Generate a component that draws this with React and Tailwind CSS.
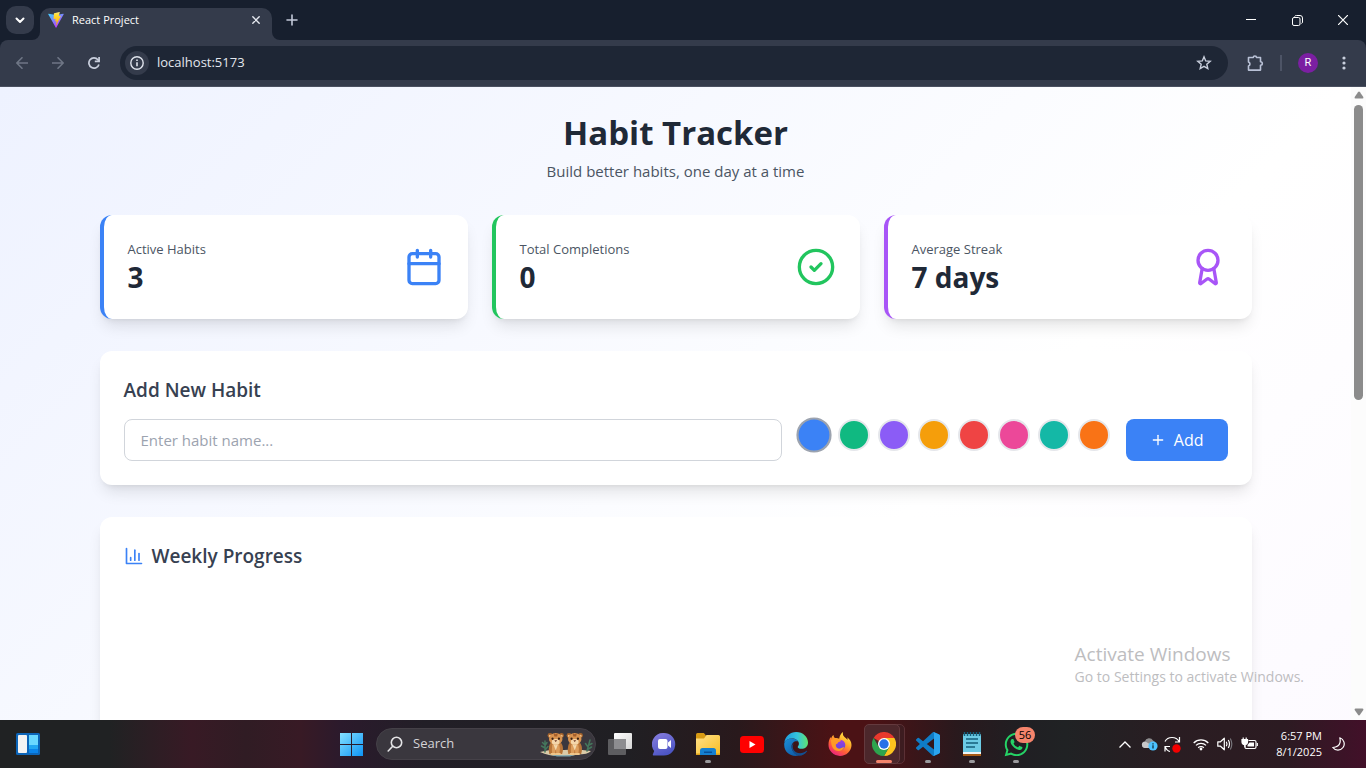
import React, { useState } from "react";
import { Plus } from "lucide-react";
import { FaWhatsapp } from "react-icons/fa";

const COLORS = [
  { name: "Blue", bg: "bg-[#3b82f6]" },
  { name: "Green", bg: "bg-[#10b981]" },
  { name: "Purple", bg: "bg-[#8b5cf6]" },
  { name: "Amber", bg: "bg-[#f59e0b]" },
  { name: "Red", bg: "bg-[#ef4444]" },
  { name: "Pink", bg: "bg-[#ec4899]" },
  { name: "Teal", bg: "bg-[#14b8a6]" },
  { name: "Orange", bg: "bg-[#f97316]" },
];

function Stroke({ size = 16, width = 2, box = 24, className = "", children }) {
  return (
    <svg
      width={size}
      height={size}
      viewBox={`0 0 ${box} ${box}`}
      fill="none"
      stroke="currentColor"
      strokeWidth={width}
      strokeLinecap="round"
      strokeLinejoin="round"
      className={`shrink-0 ${className}`}
      aria-hidden="true"
    >
      {children}
    </svg>
  );
}

function ViteLogo() {
  return (
    <svg width="16" height="16" viewBox="0 0 32 32" className="shrink-0" aria-hidden="true">
      <defs>
        <linearGradient id="viteA" x1="0" y1="0" x2="0.6" y2="1">
          <stop offset="0" stopColor="#41d1ff" />
          <stop offset="1" stopColor="#bd34fe" />
        </linearGradient>
        <linearGradient id="viteB" x1="0" y1="0" x2="0" y2="1">
          <stop offset="0" stopColor="#ffea83" />
          <stop offset="0.2" stopColor="#ffdd35" />
          <stop offset="1" stopColor="#ffa800" />
        </linearGradient>
      </defs>
      <path d="M31.4 4.7 16.8 30.9a.8.8 0 0 1-1.4 0L.5 4.7a.8.8 0 0 1 .8-1.2L16 6.100l14.500-2.600a.8.8 0 0 1 .9 1.200z" fill="url(#viteA)" />
      <path d="M23 .2 12.200 2.300a.4.4 0 0 0-.3.400l-.7 11.200a.4.4 0 0 0 .5.400l3-.7a.4.4 0 0 1 .5.500l-.9 4.400a.4.4 0 0 0 .5.500l1.900-.6a.4.4 0 0 1 .5.500l-1.400 6.900c-.1.400.5.700.7.300l.2-.2 8.800-17.600a.4.4 0 0 0-.4-.6l-3.100.6a.4.4 0 0 1-.5-.5l2-7a.4.4 0 0 0-.5-.6z" fill="url(#viteB)" />
    </svg>
  );
}

function BrowserChrome() {
  return (
    <header className="shrink-0 bg-[#171f2e] text-[#c9cfdd]">
      <div className="flex h-10 items-start">
        <button aria-label="Search tabs" className="mt-[6px] ml-[6px] flex size-7 items-center justify-center rounded-[10px] bg-[#343b4b] text-white">
          <Stroke size={10} width={2} box={10}><path d="M1.500 3.500 5 7l3.500-3.500" /></Stroke>
        </button>
        <div className="relative mt-2 ml-[6px] flex h-8 w-58 items-center rounded-t-[10px] bg-[#343b4b] px-2 pb-2">
          <svg className="absolute bottom-0 -left-2" width="8" height="8" viewBox="0 0 8 8" aria-hidden="true">
            <path d="M8 0v8H0a8 8 0 0 0 8-8z" fill="#343b4b" />
          </svg>
          <svg className="absolute -right-2 bottom-0" width="8" height="8" viewBox="0 0 8 8" aria-hidden="true">
            <path d="M0 0v8h8a8 8 0 0 1-8-8z" fill="#343b4b" />
          </svg>
          <ViteLogo />
          <span className="ml-2 flex-1 text-[11px] text-white">React Project</span>
          <button aria-label="Close tab" className="flex size-4 items-center justify-center text-[#e5e8ef]">
            <Stroke size={8} width={1.400} box={8}><path d="M.8.8l6.400 6.400M7.200.8.8 7.200" /></Stroke>
          </button>
        </div>
        <button aria-label="New tab" className="ml-[6px] flex size-7 items-center justify-center self-center text-[#c3c9d9]">
          <Stroke size={12} width={1.600} box={12}><path d="M6 1v10M1 6h10" /></Stroke>
        </button>
        <div className="ml-auto flex h-10 text-white">
          <button aria-label="Minimize" className="flex w-[46px] items-center justify-center">
            <svg width="10" height="10" aria-hidden="true"><path d="M0 4.500h10" stroke="currentColor" /></svg>
          </button>
          <button aria-label="Restore" className="flex w-[46px] items-center justify-center">
            <svg width="11" height="11" fill="none" stroke="currentColor" aria-hidden="true">
              <rect x="0.500" y="2.500" width="7.500" height="8" rx="1.500" />
              <path d="M2.500 1.500Q3 .5 4.500.5H8A2.500 2.500 0 0 1 10.500 3v4Q10.500 8 9.500 8.500" />
            </svg>
          </button>
          <button aria-label="Close" className="flex w-[46px] items-center justify-center">
            <svg width="10" height="10" stroke="currentColor" strokeWidth="1.200" aria-hidden="true"><path d="M0 0l10 10M10 0 0 10" /></svg>
          </button>
        </div>
      </div>

      <div className="flex h-[47px] items-center rounded-t-lg border-b border-[#4a5060] bg-[#343b4b] pr-[6px] pl-1">
        <button aria-label="Back" className="flex size-9 items-center justify-center text-[#6f7686]">
          <Stroke size={12} width={1.600} box={12}><path d="M11.500 6H.8M6 .8.8 6 6 11.200" /></Stroke>
        </button>
        <button aria-label="Forward" className="flex size-9 items-center justify-center text-[#6f7686]">
          <Stroke size={12} width={1.600} box={12}><path d="M.5 6h10.700M6 .8 11.200 6 6 11.200" /></Stroke>
        </button>
        <button aria-label="Reload" className="flex size-9 items-center justify-center text-[#c9cfdd]">
          <svg width="12" height="12" viewBox="0 0 12 12" fill="none" stroke="currentColor" strokeWidth="1.700" aria-hidden="true">
            <path d="M10.900 7.400A5.100 5.100 0 1 1 9.900 2.700L11 4" />
            <path d="M11.100 0v4.400H6.800" />
          </svg>
        </button>
        <div className="ml-2 flex h-[34px] flex-1 items-center rounded-full bg-[#1e2635] pr-4 pl-[5px]">
          <button aria-label="Site information" className="flex size-6 items-center justify-center rounded-full bg-[#343b4b] text-[#dfe3ec]">
            <svg width="14" height="14" viewBox="0 0 14 14" fill="none" stroke="currentColor" strokeWidth="1.400" aria-hidden="true">
              <circle cx="7" cy="7" r="6.200" />
              <path d="M7 6.300v4M7 3.500v1.500" strokeWidth="1.600" />
            </svg>
          </button>
          <input
            aria-label="Address"
            defaultValue="localhost:5173"
            className="ml-2 min-w-0 flex-1 bg-transparent text-[13px] text-[#e3e6ee] outline-none"
          />
          <button aria-label="Bookmark this tab" className="text-[#c9cfdd]">
            <svg width="16" height="16" viewBox="0 0 16 16" fill="none" stroke="currentColor" strokeWidth="1.400" aria-hidden="true">
              <path d="M8 1.800l1.700 4.100 4.500.4-3.400 2.900 1 4.400L8 11.300l-3.800 2.300 1-4.400-3.400-2.900 4.500-.4z" />
            </svg>
          </button>
        </div>
        <button aria-label="Extensions" className="ml-[18px] flex size-[18px] items-center justify-center text-[#b9c1d6]">
          <svg width="17" height="17" viewBox="0 0 17 17" fill="none" stroke="currentColor" strokeWidth="1.600" strokeLinejoin="round" aria-hidden="true">
            <path d="M1.500 2.500h4.800a1.600 1.500 0 0 1 3.200 0h4v4.300a1.800 1.700 0 0 1 0 3.400v4.900h-12v-4.200a2.100 2.100 0 0 0 0-4z" />
          </svg>
        </button>
        <span className="ml-4 h-4 w-[2px] bg-[#4d5466]" />
        <button aria-label="Profile" className="ml-4 flex size-5 items-center justify-center rounded-full bg-[#7b1fa2] font-[Roboto,sans-serif] text-[11px] text-white">
          R
        </button>
        <button aria-label="Menu" className="ml-[10px] flex size-8 items-center justify-center text-[#c9cfdd]">
          <svg width="4" height="14" fill="currentColor" aria-hidden="true">
            <circle cx="2" cy="2" r="1.600" /><circle cx="2" cy="7" r="1.600" /><circle cx="2" cy="12" r="1.600" />
          </svg>
        </button>
      </div>
    </header>
  );
}

function StatCard({ label, value, border, children }) {
  return (
    <section className={`flex items-center justify-between rounded-xl border-l-4 bg-white p-6 shadow-lg ${border}`}>
      <div>
        <p className="text-[13px] leading-5 text-[#4b5563]">{label}</p>
        <p className="text-[28px] leading-9 font-bold text-[#1f2937]">{value}</p>
      </div>
      {children}
    </section>
  );
}

function HabitTracker() {
  const [selected, setSelected] = useState(0);
  return (
    <main className="min-h-[1305px] bg-gradient-to-br from-[#eef2ff] via-white to-[#faf5ff] p-6">
      <div className="mx-auto max-w-6xl">
        <div className="mb-8 text-center">
          <h1 className="mb-1 text-[33px] leading-11 font-bold text-[#1f2937]">Habit Tracker</h1>
          <p className="text-[15px] leading-6 text-[#4b5563]">Build better habits, one day at a time</p>
        </div>

        <div className="mb-8 grid grid-cols-3 gap-6">
          <StatCard label="Active Habits" value="3" border="border-[#3b82f6]">
            <Stroke size={40} className="text-[#3b82f6]">
              <path d="M8 2v4M16 2v4" /><rect width="18" height="18" x="3" y="4" rx="2" /><path d="M3 10h18" />
            </Stroke>
          </StatCard>
          <StatCard label="Total Completions" value="0" border="border-[#22c55e]">
            <Stroke size={40} className="text-[#22c55e]">
              <circle cx="12" cy="12" r="10" /><path d="m9 12 2 2 4-4" />
            </Stroke>
          </StatCard>
          <StatCard label="Average Streak" value="7 days" border="border-[#a855f7]">
            <Stroke size={40} className="text-[#a855f7]">
              <path d="m15.477 12.890 1.515 8.526a.5.500 0 0 1-.810.470l-3.580-2.687a1 1 0 0 0-1.197 0l-3.586 2.686a.5.500 0 0 1-.810-.469l1.514-8.526" />
              <circle cx="12" cy="8" r="6" />
            </Stroke>
          </StatCard>
        </div>

        <section className="mb-8 rounded-xl bg-white p-6 shadow-lg">
          <h2 className="mb-[14px] text-[19px] leading-[30px] font-semibold text-[#374151]">Add New Habit</h2>
          <form className="flex gap-4" onSubmit={(e) => e.preventDefault()}>
            <input
              type="text"
              aria-label="Habit name"
              placeholder="Enter habit name..."
              className="min-w-0 flex-1 rounded-lg border border-[#d1d5db] px-4 py-2 text-[15px] leading-6 outline-none placeholder:text-[#9ca3af]"
            />
            <div className="flex gap-2">
              {COLORS.map((c, i) => (
                <button
                  key={c.name}
                  type="button"
                  aria-label={c.name}
                  aria-pressed={i === selected}
                  onClick={() => setSelected(i)}
                  className={`size-8 rounded-full border-2 ${c.bg} ${i === selected ? "scale-110 border-[#9ca3af]" : "border-[#e5e7eb]"}`}
                />
              ))}
            </div>
            <button type="submit" className="flex items-center gap-2 rounded-lg bg-[#3b82f6] px-6 py-2 text-base text-white">
              <Plus size={16} strokeWidth={2} aria-hidden="true" />
              Add
            </button>
          </form>
        </section>

        <section className="min-h-96 rounded-xl bg-white p-6 shadow-lg">
          <h2 className="flex items-center gap-2 text-[19px] leading-[30px] font-semibold text-[#374151]">
            <Stroke size={20} className="text-[#3b82f6]">
              <path d="M3 3v18h18" /><path d="M18 17V9" /><path d="M13 17V5" /><path d="M8 17v-3" />
            </Stroke>
            Weekly Progress
          </h2>
        </section>
      </div>
    </main>
  );
}

function ScrollTrack() {
  return (
    <div className="flex w-[15px] shrink-0 flex-col items-center justify-between bg-[#fcfcfc] py-1 text-[#8b8b8b]" aria-hidden="true">
      <svg width="10" height="8" fill="currentColor"><path d="M5 .5Q5.500.5 6 1.200L9.300 6q.5 1.500-.8 1.500h-7Q.2 7.500.7 6L4 1.200Q4.500.5 5 .5z" /></svg>
      <div className="mt-[6px] flex w-[9px] flex-1 flex-col">
        <div className="h-[49%] rounded-full bg-[#8b8b8b]" />
      </div>
      <svg width="10" height="8" fill="currentColor"><path d="M5 7.500Q4.500 7.500 4 6.800L.7 2Q.2.5 1.500.5h7Q9.800.5 9.300 2L6 6.800Q5.500 7.500 5 7.500z" /></svg>
    </div>
  );
}

function Cub() {
  return (
    <g>
      <path d="M5 16Q2 24 4 31h18q3-8-1-15z" fill="#b87538" />
      <path d="M8 18q-1 8 0 14h4l1-10 1 10h4q2-8 0-14z" fill="#dc9d5c" />
      <path d="M10 18h6l-3 8z" fill="#f3d9ae" />
      <circle cx="5" cy="5" r="3.500" fill="#a5632c" />
      <circle cx="21" cy="5" r="3.500" fill="#a5632c" />
      <circle cx="5" cy="5.500" r="1.800" fill="#edc28c" />
      <circle cx="21" cy="5.500" r="1.800" fill="#edc28c" />
      <ellipse cx="13" cy="10" rx="9.500" ry="8.500" fill="#d8934f" />
      <path d="M10 1.500q3 3 6 0l-1 5h-4z" fill="#a65f2b" />
      <ellipse cx="13" cy="14" rx="5.500" ry="4" fill="#f4d6aa" />
      <circle cx="8.500" cy="9.500" r="1.600" fill="#382014" />
      <circle cx="17.500" cy="9.500" r="1.600" fill="#382014" />
      <path d="M11 11.500h4L13 14z" fill="#6b3423" />
      <path d="M7 31h5M14 31h5" stroke="#f0c68b" strokeWidth="2.500" strokeLinecap="round" />
    </g>
  );
}

function SearchArt() {
  return (
    <svg width="54" height="26" viewBox="0 0 108 52" className="shrink-0" aria-hidden="true">
      <path d="M2 42q22-6 48-4 26-3 54 2-6 7-28 7-12 4-34 3-20 1-40-8z" fill="#dacba9" />
      <path d="M18 46q30 5 58 0l-14 5H36z" fill="#7ba5ae" />
      <g fill="none" stroke="#44765c" strokeWidth="3" strokeLinecap="round">
        <path d="M12 42V20M12 28l-5-5M12 34l-7-4M12 38l6-7M12 29l4-6" />
        <path d="M96 40l6-22M98 32l-5-7M100 28l6-3M97 37l8-5" />
      </g>
      <g transform="translate(15 2) scale(1.420)"><Cub /></g>
      <g transform="translate(53 2) scale(1.420)"><Cub /></g>
    </svg>
  );
}

function TaskButton({ label, open, children }) {
  return (
    <button aria-label={label} className="relative flex h-12 w-11 items-center justify-center">
      {children}
      {open && <span className="absolute bottom-[5px] left-[19px] h-[3px] w-[6px] rounded-full bg-[#9a9a9d]" />}
    </button>
  );
}

function Taskbar() {
  return (
    <footer className="grid h-12 shrink-0 grid-cols-[1fr_auto_1fr] items-center bg-[linear-gradient(90deg,#202223_0%,#202223_8%,#381a25_14%,#301c24_18%,#381a25_22%,#2b1a2c_25%,#221f27_31%,#201f23_46%,#29191c_54%,#4b1215_61%,#4b1215_64%,#29191d_70%,#201f23_75%,#202224_78%,#2a1d22_86%,#2c1b22_94%,#421029_100%)] text-white">
      <div className="pl-4">
        <button aria-label="Widgets" className="block">
          <svg width="24" height="22" viewBox="0 0 24 22" aria-hidden="true">
            <rect width="24" height="22" rx="1.500" fill="#0c65b8" />
            <rect x="2" y="2" width="9" height="18" rx="1" fill="#f3f3f3" />
            <rect x="13" y="2" width="9" height="10" fill="#6ad8ff" />
            <rect x="13" y="12" width="9" height="4" fill="#22a7f2" />
            <rect x="13" y="16" width="9" height="4" fill="#0a84ea" />
          </svg>
        </button>
      </div>

      <div className="flex items-center">
        <button aria-label="Start" className="mr-[2px] flex h-12 w-[46px] items-center justify-center">
          <svg width="23" height="23" viewBox="0 0 23 23" aria-hidden="true">
            <defs>
              <linearGradient id="win" x1="0" y1="0" x2="1" y2="1"><stop offset="0" stopColor="#85e1ff" /><stop offset="1" stopColor="#0d93f5" /></linearGradient>
            </defs>
            <path d="M0 0h11v11H0zM12 0h11v11H12zM0 12h11v11H0zM12 12h11v11H12z" fill="url(#win)" />
          </svg>
        </button>
        <label className="mr-[2px] flex h-8 w-55 items-center rounded-full border border-[#454148] bg-[#3a373e] pr-[2px] pl-[10px]">
          <Stroke size={16} width={1.600} box={16} className="text-[#e4e4e6]"><circle cx="9.500" cy="6.500" r="5.200" /><path d="M5.700 10.300 1.200 15" /></Stroke>
          <input aria-label="Search" placeholder="Search" className="ml-[10px] min-w-0 flex-1 bg-transparent text-[13px] outline-none placeholder:text-[#d4d3d6]" />
          <SearchArt />
        </label>

        <TaskButton label="Task view">
          <svg width="24" height="22" viewBox="0 0 24 22" aria-hidden="true">
            <defs><linearGradient id="tv" x1="0" y1="0" x2="1" y2="1"><stop offset="0" stopColor="#fff" /><stop offset="1" stopColor="#d5d5d5" /></linearGradient></defs>
            <rect x="6" width="18" height="16" rx="1" fill="url(#tv)" />
            <rect y="6" width="18" height="16" rx="1" fill="#5d5d60" />
            <path d="M6 6h12v10H6z" fill="#8d8d90" />
          </svg>
        </TaskButton>
        <TaskButton label="Chat">
          <svg width="24" height="24" viewBox="0 0 24 24" aria-hidden="true">
            <defs><linearGradient id="chat" x1="0" y1="0" x2="0.500" y2="1"><stop offset="0" stopColor="#8a7fe0" /><stop offset="1" stopColor="#4c55c4" /></linearGradient></defs>
            <path d="M12 1a11 11 0 1 1 0 22.500H1.500q-1.200-.3-.5-1.500l1.200-3A11.300 11.300 0 0 1 12 1z" fill="url(#chat)" />
            <rect x="6" y="7" width="9.500" height="10" rx="2" fill="#fff" />
            <path d="M16 10.500 19 8v8l-3-2.500z" fill="#fff" />
          </svg>
        </TaskButton>
        <TaskButton label="File Explorer" open>
          <svg width="24" height="22" viewBox="0 0 24 22" aria-hidden="true">
            <defs><linearGradient id="fold" x1="0" y1="0" x2="1" y2="1"><stop offset="0" stopColor="#ffe18a" /><stop offset="1" stopColor="#f8bd22" /></linearGradient></defs>
            <path d="M0 1.500Q0 0 1.500 0h6.300L10 2.500V6H0z" fill="#d79a13" />
            <path d="M0 5.500h8L10.500 2H22.500Q24 2 24 3.500V22H0z" fill="url(#fold)" />
            <path d="M4 22v-4.500Q4 15 6.500 15h11q2.500 0 2.500 2.500V22z" fill="#1580d0" />
            <path d="M8 18.500h8V20H8z" fill="#07509a" />
            <path d="M0 20.500h4V22H0zM20 20.500h4V22h-4z" fill="#dca11b" />
          </svg>
        </TaskButton>
        <TaskButton label="YouTube">
          <svg width="24" height="17" viewBox="0 0 24 17" aria-hidden="true">
            <rect width="24" height="17" rx="3.500" fill="#f00" /><path d="M9.500 5v7l6-3.500z" fill="#fff" />
          </svg>
        </TaskButton>
        <TaskButton label="Edge">
          <svg width="24" height="24" viewBox="0 0 24 24" aria-hidden="true">
            <defs>
              <linearGradient id="edgeA" x1="0" y1="0.300" x2="1" y2="0.300"><stop offset="0" stopColor="#1c9ce0" /><stop offset="0.550" stopColor="#35c4dd" /><stop offset="1" stopColor="#5fe36f" /></linearGradient>
              <linearGradient id="edgeB" x1="0" y1="0" x2="0.800" y2="1"><stop offset="0" stopColor="#1b8fd8" /><stop offset="1" stopColor="#0f5aa5" /></linearGradient>
            </defs>
            <path d="M.3 10.500C1.200 4.500 6 0 12.200 0 19 0 24 5 24 10.400c0 4-3 6.400-6.600 6.400-2.300 0-3.700-.8-3.700-1.800 0-.8 1.200-1.200 1.200-3.200C14.900 8.500 11.500 6.500 8 6.500c-3.600 0-6.600 1.700-7.700 4z" fill="url(#edgeA)" />
            <path d="M.2 12.500C.2 8.500 4 6.500 8 6.500c3 0 5 1.300 6 3-3-1-6.400 1-6.400 5 0 4.500 3.600 8 7.500 9C7 25.500 0 20.500.2 12.500z" fill="url(#edgeB)" />
            <path d="M9.800 11.500C8 14 8.500 18 12 20.200c3.300 2 7.600 1.200 10.600-1.400.5-.3.8 0 .5.500-2 3-4.600 4.300-8 4.500-4.500-1-7.700-5-7.300-9 .1-1.500.8-2.600 2-3.300z" fill="#124f91" />
          </svg>
        </TaskButton>
        <TaskButton label="Firefox">
          <svg width="24" height="24" viewBox="0 0 24 24" aria-hidden="true">
            <defs>
              <linearGradient id="ffA" x1="0.800" y1="0" x2="0.200" y2="1"><stop offset="0" stopColor="#fff04a" /><stop offset="0.350" stopColor="#ffb02c" /><stop offset="0.650" stopColor="#ff6036" /><stop offset="1" stopColor="#e8198b" /></linearGradient>
              <linearGradient id="ffB" x1="0.500" y1="0" x2="0.500" y2="1"><stop offset="0" stopColor="#a23be0" /><stop offset="1" stopColor="#5b4bdd" /></linearGradient>
            </defs>
            <path d="M15 0c-.5 2.500.2 4 2 5.500 1 .8 2 1.500 2.500 2.500.2-1 0-2-.3-2.700C22 7.500 23.500 10 23.500 13A11.500 11 0 0 1 .5 12.800C.5 9.500 1.300 7 2.800 5c0 .6.100 1 .3 1.500C3.800 4.800 4.500 3.700 5.600 3c-.1 1.500.4 2.400 1.400 3 1.600-.3 3 0 4.200.7C11.500 4 12.800 1.500 15 0z" fill="url(#ffA)" />
            <circle cx="12" cy="13" r="5.300" fill="url(#ffB)" />
            <path d="M3 8c2-2 5-2 6.500-.6l3.200.7c.5.800-.2 1.600-2.500 2.100-.6 1.800-1.600 1.200-2.400 2.600-.2 2.700 2 4.400 4.500 3.700 2-.5 2.300-1.700 3.800-1-1 2.300-3 3.500-5.400 3.500C5.500 19 3 14.500 3 8z" fill="#ff9b25" />
          </svg>
        </TaskButton>
        <button aria-label="Chrome" className="relative flex h-12 w-11 items-center justify-center">
          <span className="absolute top-1 left-1 h-10 w-[39px] rounded-[5px] border border-[#5b3035] bg-[#3d1c20]" />
          <span className="absolute top-1 left-[2px] h-10 w-9 rounded-[5px] border border-[#643a3e] bg-[#4c272b]" />
          <svg width="24" height="24" viewBox="0 0 24 24" className="relative" aria-hidden="true">
            <path d="M12 12 1.600 6A12 12 0 0 1 22.400 6z" fill="#e8392d" />
            <path d="M12 12V6h10.400A12 12 0 0 1 12 24l5.200-9z" fill="#fcc31e" />
            <path d="M12 12l5.200 3L12 24A12 12 0 0 1 1.600 6l5.200 9z" fill="#2da44e" />
            <circle cx="12" cy="12" r="6" fill="#fff" />
            <circle cx="12" cy="12" r="4.700" fill="#2671e8" />
          </svg>
          <span className="absolute bottom-[5px] left-[14px] h-[3px] w-4 rounded-full bg-[#f5846c]" />
        </button>
        <TaskButton label="Visual Studio Code" open>
          <svg width="24" height="24" viewBox="0 0 24 24" aria-hidden="true">
            <path d="M23.150 2.587L18.210.210a1.494 1.494 0 0 0-1.705.290l-9.460 8.630-4.120-3.128a.999.999 0 0 0-1.276.057L.327 7.261A1 1 0 0 0 .326 8.740L3.899 12 .326 15.260a1 1 0 0 0 .001 1.479L1.650 17.940a.999.999 0 0 0 1.276.057l4.120-3.128 9.460 8.630a1.492 1.492 0 0 0 1.704.290l4.942-2.377A1.500 1.500 0 0 0 24 20.060V3.939a1.500 1.500 0 0 0-.850-1.352zm-5.146 14.861L10.826 12l7.178-5.448v10.896z" fill="#0f7cc6" />
            <path d="M17.200.2 18.200.2l4.950 2.387Q24 3 24 3.939V20.060q0 .9-.85 1.352L18.200 23.800l-1-.1q.8-.3.8-1.400V1.700q0-1.200-.8-1.500z" fill="#2ba4ee" />
          </svg>
        </TaskButton>
        <TaskButton label="Notepad" open>
          <svg width="20" height="24" viewBox="0 0 20 24" aria-hidden="true">
            <rect x="1" y="2" width="18" height="21" rx="1" fill="#6ccbe5" />
            <path d="M1 20h18v2H1z" fill="#eef4f5" /><path d="M1 22h18v2H1z" fill="#a85b16" />
            <path d="M2.500 0v4M5.500 0v4M8.500 0v4M11.500 0v4M14.500 0v4M17.500 0v4" stroke="#13607e" strokeWidth="1.500" />
            <path d="M4 7h12M4 11h12M4 15h9" stroke="#14607c" strokeWidth="1.600" />
          </svg>
        </TaskButton>
        <TaskButton label="WhatsApp, 56 unread" open>
          <FaWhatsapp size={27} color="#25d366" aria-hidden="true" />
          <span className="absolute top-[7px] left-[21px] flex h-4 w-5 items-center justify-center rounded-full bg-[#f5846c] text-[11px] text-black">56</span>
        </TaskButton>
      </div>

      <div className="flex items-center justify-end pr-5">
        <button aria-label="Show hidden icons" className="mr-[10px]">
          <svg width="12" height="7" fill="none" stroke="currentColor" strokeWidth="1.300" aria-hidden="true"><path d="M.5 6.500 6 1l5.500 5.500" /></svg>
        </button>
        <svg width="17" height="14" viewBox="0 0 17 14" className="mr-[6px]" aria-hidden="true">
          <path d="M3.500 11a3.300 3.300 0 0 1 .3-6.500A4.500 4.500 0 0 1 12 3.500a4 4 0 0 1 2 5V11z" fill="#8c8c8e" />
          <path d="M3.500 11a3.200 3.200 0 0 1 0-6.300q1.500-.2 3 1L12 9v2z" fill="#c7c7c9" />
          <circle cx="12" cy="9" r="4.600" fill="#4cc2ff" /><path d="M12 8.300v3.200M12 6.300v1.200" stroke="#10303d" strokeWidth="1.300" />
        </svg>
        <svg width="17" height="17" viewBox="0 0 17 17" fill="none" stroke="currentColor" strokeWidth="1.200" className="mr-3" aria-hidden="true">
          <path d="M1 5.500Q3 1.500 8 1.500t7 4M15.500 1v5H11M6 15.500Q3 15 1.300 11M1 15.500v-5h5" />
          <circle cx="12.500" cy="12.500" r="4.200" fill="#f40000" stroke="none" />
        </svg>
        <svg width="16" height="13" viewBox="0 0 16 13" fill="none" stroke="currentColor" strokeWidth="1.300" className="mr-2" aria-hidden="true">
          <path d="M.7 5a10.200 10.200 0 0 1 14.600 0M3 7.400a7 7 0 0 1 10 0M5.200 9.700a4 4 0 0 1 5.600 0" />
          <circle cx="8" cy="11" r="1.400" fill="currentColor" stroke="none" />
        </svg>
        <svg width="16" height="14" viewBox="0 0 16 14" fill="none" stroke="currentColor" strokeWidth="1.200" strokeLinejoin="round" className="mr-2" aria-hidden="true">
          <path d="M.8 4.800h2.700L7.300 1.200v11.600L3.500 9.200H.8z" />
          <path d="M9.300 4.800q1.400 2.200 0 4.400M11.300 3q2.400 4 0 8" /><path d="M13.300 1.500q3 5.500 0 11" stroke="#77747a" />
        </svg>
        <svg width="17" height="14" viewBox="0 0 17 14" fill="none" stroke="currentColor" strokeWidth="1.200" className="mr-[18px]" aria-hidden="true">
          <path d="M7.500 3.500h6q1.500 0 1.500 1.500v5q0 1.500-1.500 1.500h-8q-1.200 0-1.500-1V8" /><path d="M16.300 6v3" />
          <path d="M8.500 5.500H13v4H6.500V8z" fill="currentColor" stroke="none" />
          <path d="M1 2.500h5.500v2.300a2.700 2.700 0 0 1-5.500 0zM2.200.5v2M5.200.5v2M3.800 7v3" fill="currentColor" />
        </svg>
        <time dateTime="2025-08-01T18:57" className="mr-[10px] text-right text-[11px] leading-4">
          6:57 PM<br />8/1/2025
        </time>
        <svg width="14" height="14" viewBox="0 0 14 14" fill="none" stroke="currentColor" strokeWidth="1.200" strokeLinejoin="round" aria-hidden="true">
          <path d="M7.800.8a6.300 6.300 0 1 1-7 9.700c3.500-.2 6.500-1.700 7.200-4.800.4-1.800.2-3.400-.2-4.900z" />
        </svg>
      </div>
    </footer>
  );
}

export default function App() {
  return (
    <div className="flex h-screen flex-col overflow-hidden font-['Open_Sans','Noto_Sans',sans-serif]">
      <BrowserChrome />
      <div className="relative flex min-h-0 flex-1">
        <div className="min-w-0 flex-1 overflow-hidden">
          <HabitTracker />
        </div>
        <ScrollTrack />
        <div className="pointer-events-none absolute right-[62px] bottom-[33px] text-[#bdbdbf]">
          <p className="text-[19px] leading-[26px]">Activate Windows</p>
          <p className="text-[14px] leading-5">Go to Settings to activate Windows.</p>
        </div>
      </div>
      <Taskbar />
    </div>
  );
}
